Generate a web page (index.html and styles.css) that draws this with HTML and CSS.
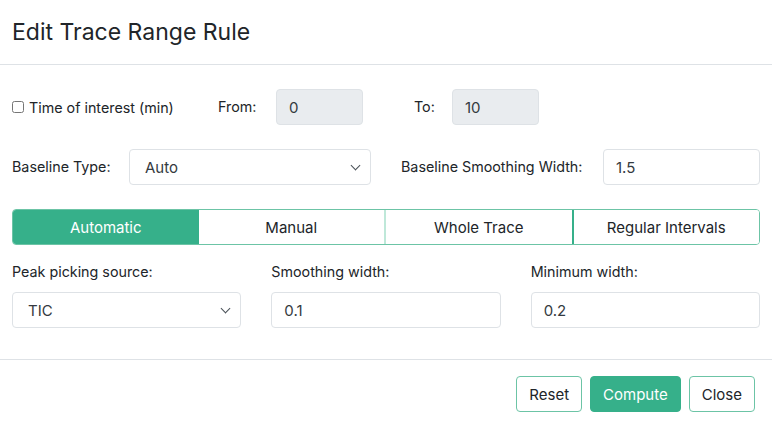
FILE: index.html
```html
<!DOCTYPE html>
<html lang="en">
<head>
  <meta charset="UTF-8" />
  <meta name="viewport" content="width=device-width, initial-scale=1.0"/>
  <title>Edit Trace Range Rule</title>
  <link rel="stylesheet" href="styles.css">
</head>
<body>

  <div class="modal">
    <div class="modal-header">
      <h1>Edit Trace Range Rule</h1>
    </div>

    <div class="modal-body">
      <div class="row row-time">
        <label class="toi"><input type="checkbox"> Time of interest (min)</label>
        <span class="lbl lbl-from">From:</span>
        <input class="field field-small" type="text" value="0" disabled>
        <span class="lbl lbl-to">To:</span>
        <input class="field field-small" type="text" value="10" disabled>
      </div>

      <div class="row row-base">
        <span class="lbl lbl-type">Baseline Type:</span>
        <div class="select-wrap select-type">
          <select class="field">
            <option>Auto</option>
          </select>
        </div>
        <span class="lbl lbl-smooth">Baseline Smoothing Width:</span>
        <input class="field field-smooth" type="text" value="1.5">
      </div>

      <div class="btn-group">
        <button class="seg active">Automatic</button>
        <button class="seg">Manual</button>
        <button class="seg seg-light">Whole Trace</button>
        <button class="seg seg-dark">Regular Intervals</button>
      </div>

      <div class="grid">
        <div class="col">
          <span class="lbl">Peak picking source:</span>
          <div class="select-wrap">
            <select class="field">
              <option>TIC</option>
            </select>
          </div>
        </div>
        <div class="col">
          <span class="lbl">Smoothing width:</span>
          <input class="field" type="text" value="0.1">
        </div>
        <div class="col">
          <span class="lbl">Minimum width:</span>
          <input class="field" type="text" value="0.2">
        </div>
      </div>
    </div>

    <div class="modal-footer">
      <button class="btn btn-outline">Reset</button>
      <button class="btn btn-green">Compute</button>
      <button class="btn btn-outline">Close</button>
    </div>
  </div>

</body>
</html>
```

FILE: styles.css
```css
body {
  margin: 0;
  background-color: #ffffff;
  font-family: Inter, "Noto Sans", sans-serif;
  color: #212529;
}
.modal-header {
  padding: 18px 12px 18px;
  border-bottom: 1px solid #dee2e6;
}
.modal-header h1 {
  margin: 0;
  font-size: 23px;
  font-weight: 400;
  line-height: 28px;
  color: #212529;
}
.modal-body {
  padding: 24px 12px 31px;
  border-bottom: 1px solid #dee2e6;
}
.row {
  display: flex;
  align-items: center;
  height: 36px;
  margin-bottom: 24px;
}
.lbl {
  font-size: 14.3px;
  line-height: 20px;
}
.toi {
  width: 206px;
  font-size: 14.3px;
  display: flex;
  align-items: center;
}
.toi input {
  margin: 0 5px 0 0;
  width: 12px;
  height: 12px;
}
.lbl-from { width: 58px; }
.lbl-to { width: 38px; margin-left: 51px; }
.lbl-type { width: 117px; }
.lbl-smooth { width: 202px; margin-left: 30px; }
.field {
  box-sizing: border-box;
  height: 36px;
  border: 1px solid #dee2e6;
  border-radius: 4px;
  padding: 0 12px;
  font-family: inherit;
  font-size: 15px;
  color: #343a40;
  background-color: #ffffff;
  width: 100%;
}
.field:disabled {
  background-color: #e9ecef;
  color: #343a40;
}
.field-small { width: 87px; }
.field-smooth { width: 157px; }
select.field {
  appearance: none;
  -webkit-appearance: none;
  padding-left: 15px;
}
.select-wrap {
  position: relative;
}
.select-wrap::after {
  content: "";
  position: absolute;
  right: 12px;
  top: 13px;
  width: 6px;
  height: 6px;
  border-right: 1.3px solid #495057;
  border-bottom: 1.3px solid #495057;
  transform: rotate(45deg);
  pointer-events: none;
}
.select-type { width: 242px; }
.btn-group {
  display: flex;
  height: 36px;
  border: 1px solid #6cc4a6;
  border-radius: 4px;
  overflow: hidden;
  box-sizing: border-box;
}
.seg {
  flex: 1;
  border: none;
  background-color: #ffffff;
  font-family: inherit;
  font-size: 15px;
  color: #212529;
  padding: 0;
}
.seg.active {
  background-color: #36b08a;
  color: #ffffff;
}
.seg-light { border-left: 2px solid #bfe8d9; }
.seg-dark { border-left: 2px solid #36b08a; }
.grid {
  display: grid;
  grid-template-columns: 1fr 1fr 1fr;
  column-gap: 30px;
  margin-top: 17px;
}
.col .lbl {
  display: block;
  margin-bottom: 10px;
  color: #212529;
}
.modal-footer {
  display: flex;
  justify-content: flex-end;
  gap: 8px;
  padding: 16px 17px;
}
.btn {
  height: 36px;
  padding: 0 12px;
  border-radius: 4px;
  font-family: inherit;
  font-size: 15px;
  cursor: pointer;
}
.btn-outline {
  background-color: #ffffff;
  border: 1px solid #6cc4a6;
  color: #212529;
}
.btn-green {
  background-color: #36b08a;
  border: 1px solid #36b08a;
  color: #ffffff;
}
```
